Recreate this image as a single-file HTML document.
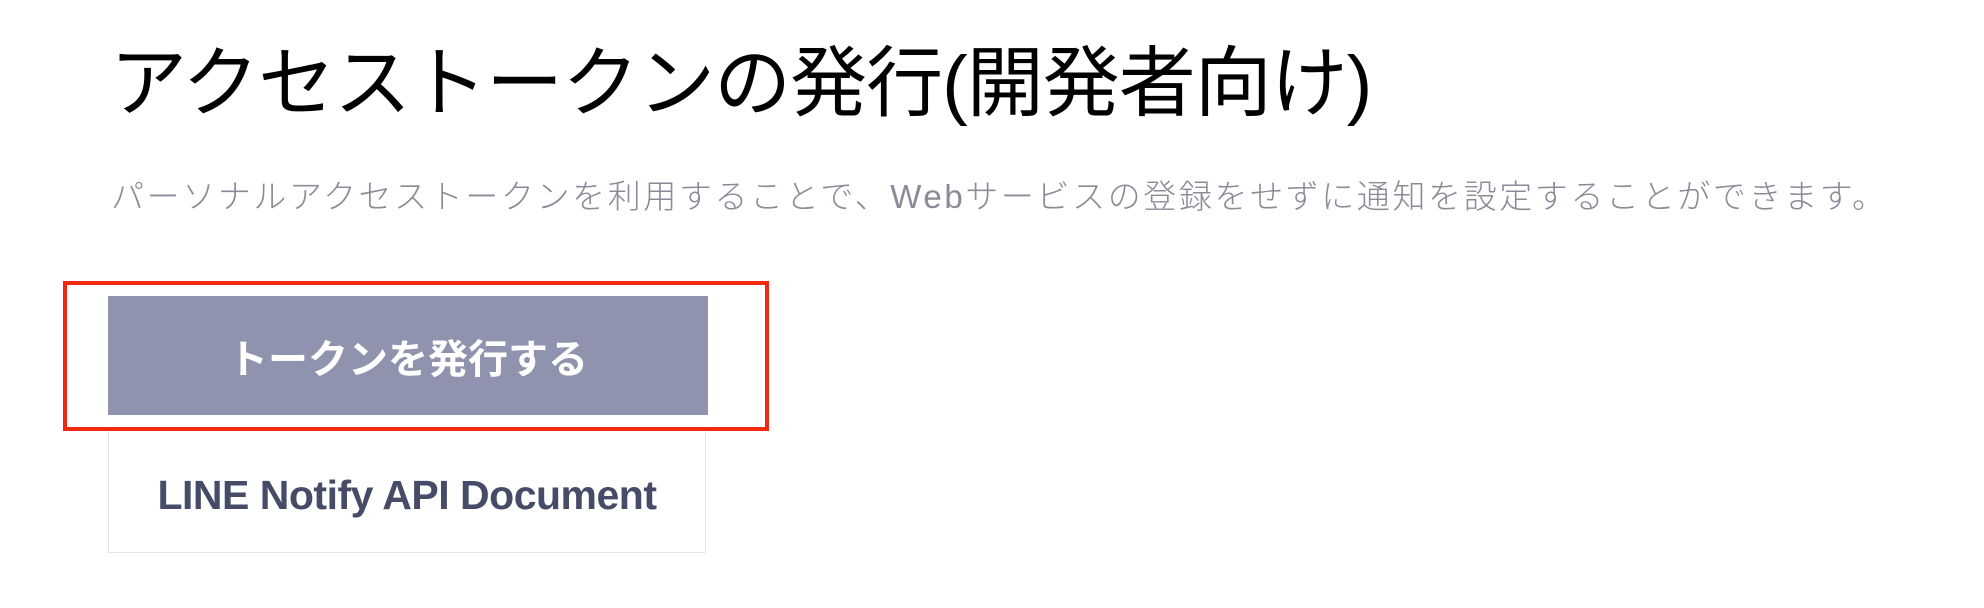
<!DOCTYPE html>
<html><head><meta charset="utf-8"><style>
body{margin:0;width:1984px;height:608px;background:#fff;overflow:hidden;font-family:"Liberation Sans","Noto Sans CJK JP",sans-serif;position:relative}
.t{position:absolute;left:110px;top:38px;font-size:77px;line-height:92px;color:#000;white-space:nowrap;letter-spacing:-1px}
.s{position:absolute;left:111px;top:174px;font-size:33px;line-height:46px;color:#8b8b98;white-space:nowrap;font-weight:300;letter-spacing:2.6px}
.red{position:absolute;left:63px;top:281px;width:698px;height:142px;border:4px solid #f02a10}
.b1{position:absolute;left:108px;top:296px;width:600px;height:119px;background:#8f93ad;color:#fff;font-weight:bold;font-size:40px;display:flex;align-items:center;justify-content:center}
.b2{position:absolute;left:108px;top:427px;width:598px;height:126px;border:1px solid #e4e4e4;border-top:none;color:#464c68;font-weight:bold;font-size:41px;display:flex;align-items:center;justify-content:center;letter-spacing:-0.5px;padding-top:12px;box-sizing:border-box}
</style></head><body>
<div class="t">アクセストークンの発行(開発者向け)</div>
<div class="s">パーソナルアクセストークンを利用することで、Webサービスの登録をせずに通知を設定することができます。</div>
<div class="b2">LINE Notify API Document</div>
<div class="b1">トークンを発行する</div>
<div class="red"></div>
</body></html>
